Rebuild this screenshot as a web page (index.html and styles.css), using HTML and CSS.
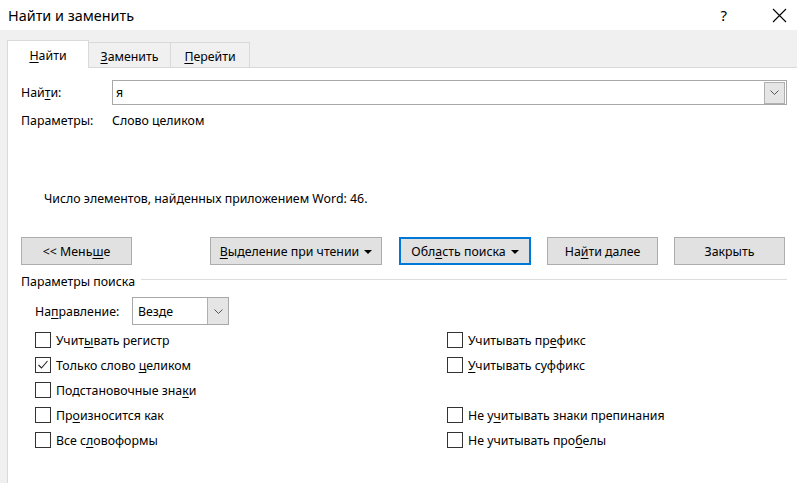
FILE: index.html
```html
<!DOCTYPE html>
<html lang="ru">
<head>
<meta charset="utf-8">
<title>Найти и заменить</title>
<link rel="stylesheet" href="styles.css">
</head>
<body>
<div class="window">
  <header class="titlebar">
    <span class="title">Найти и заменить</span>
    <span class="help">?</span>
    <svg class="close" width="15" height="15" viewBox="0 0 15 15"><path d="M1 1 L14 14 M14 1 L1 14" stroke="#000" stroke-width="1.1" fill="none"/></svg>
  </header>
  <div class="frame">
    <nav class="tabs">
      <div class="tab tab-find active"><span><u>Н</u>айти</span></div>
      <div class="tab tab-replace"><span><u>З</u>аменить</span></div>
      <div class="tab tab-goto"><span><u>П</u>ерейти</span></div>
    </nav>
    <main class="panel">
      <div class="row find-row">
        <label class="label">Най<u>т</u>и:</label>
        <div class="combo">
          <span class="combo-text">я</span>
          <span class="combo-btn"><svg width="9" height="5" viewBox="0 0 9 5"><path d="M0.5 0.5 L4.5 4.5 L8.5 0.5" stroke="#555" fill="none"/></svg></span>
        </div>
      </div>
      <div class="row params-row">
        <span class="label">Параметры:</span>
        <span>Слово целиком</span>
      </div>
      <div class="count">Число элементов, найденных приложением Word: 46.</div>
      <div class="buttons">
        <button class="btn btn-less"><span>&lt;&lt; Мень<u>ш</u>е</span></button>
        <button class="btn btn-read"><span><u>В</u>ыделение при чтении</span><span class="caret"></span></button>
        <button class="btn btn-area focused"><span>Обл<u>а</u>сть поиска</span><span class="caret"></span></button>
        <button class="btn btn-next"><span>На<u>й</u>ти далее</span></button>
        <button class="btn btn-close"><span>Закрыть</span></button>
      </div>
      <div class="group-title"><span>Параметры поиска</span><span class="group-line"></span></div>
      <div class="dir-row">
        <span class="dir-label">На<u>п</u>равление:</span>
        <div class="select">
          <span class="select-text">Везде</span>
          <span class="select-btn"><svg width="9" height="5" viewBox="0 0 9 5"><path d="M0.5 0.5 L4.5 4.5 L8.5 0.5" stroke="#555" fill="none"/></svg></span>
        </div>
      </div>
      <div class="checks">
        <div class="check"><span class="box"></span><span>Учит<u>ы</u>вать регистр</span></div>
        <div class="check"><span class="box"></span><span>Учитывать пр<u>е</u>фикс</span></div>
        <div class="check"><span class="box"><svg width="14" height="14" viewBox="0 0 14 14"><path d="M2.5 7 L5.5 10 L11.5 3" stroke="#222" stroke-width="1.1" fill="none"/></svg></span><span>Только слово <u>ц</u>еликом</span></div>
        <div class="check"><span class="box"></span><span><u>У</u>читывать суффикс</span></div>
        <div class="check"><span class="box"></span><span>Подстановочные зна<u>к</u>и</span></div>
        <div class="check empty"></div>
        <div class="check"><span class="box"></span><span>Пр<u>о</u>износится как</span></div>
        <div class="check"><span class="box"></span><span>Не у<u>ч</u>итывать знаки препинания</span></div>
        <div class="check"><span class="box"></span><span>Все с<u>л</u>овоформы</span></div>
        <div class="check"><span class="box"></span><span>Не учитывать про<u>б</u>елы</span></div>
      </div>
    </main>
  </div>
</div>
</body>
</html>
```
FILE: styles.css
```css
* { box-sizing: border-box; }
html, body { margin: 0; padding: 0; }
body {
  width: 797px;
  height: 483px;
  overflow: hidden;
  font-family: "Noto Sans", "Open Sans", sans-serif;
  font-size: 12.35px;
  color: #000;
  background: #fff;
}
u { text-decoration: underline; text-underline-offset: 2px; text-decoration-thickness: 1px; }

.window { display: flex; flex-direction: column; height: 483px; }

.titlebar {
  height: 30px;
  flex: none;
  display: flex;
  align-items: center;
  padding-left: 8px;
  padding-right: 10px;
  background: #fff;
}
.title { font-size: 14.4px; }
.help { margin-left: auto; font-size: 15px; margin-right: 45px; }
.close { display: block; }

.frame {
  flex: 1;
  display: flex;
  flex-direction: column;
  background: #f0f0f0;
  padding-left: 7px;
}
.tabs {
  height: 37px;
  flex: none;
  display: flex;
  align-items: flex-end;
}
.tab {
  height: 25px;
  border: 1px solid #d9d9d9;
  border-bottom: none;
  display: flex;
  align-items: center;
  justify-content: center;
  padding-top: 2px;
  background: #f0f0f0;
}
.tab-find { width: 82px; }
.tab-replace { width: 83px; margin-left: -1px; }
.tab-goto { width: 80px; margin-left: -1px; }
.tab.active {
  height: 28px;
  background: #fff;
  margin-bottom: -1px;
  position: relative;
  z-index: 1;
  padding-top: 1px;
}

.panel {
  flex: 1;
  background: #fff;
  border-top: 1px solid #d9d9d9;
  border-left: 1px solid #d9d9d9;
  padding: 12px 10px 0 13px;
}

.row { display: flex; align-items: center; }
.label { width: 91px; flex: none; }
.find-row { height: 25px; }
.combo {
  flex: 1;
  height: 25px;
  border: 1px solid #a8a8a8;
  display: flex;
  align-items: center;
  padding: 1px;
}
.combo-text { flex: 1; padding-left: 2px; }
.combo-btn {
  width: 21px;
  height: 22px;
  background: #e5e5e5;
  border: 1px solid #b0b0b0;
  display: flex;
  align-items: center;
  justify-content: center;
}
.params-row { height: 15px; margin-top: 8px; }

.count { margin-top: 63px; padding-left: 23px; height: 16px; line-height: 16px; }

.buttons {
  display: flex;
  margin-top: 30px;
  height: 28px;
}
.btn {
  font: inherit;
  color: #000;
  height: 28px;
  background: #e1e1e1;
  border: 1px solid #adadad;
  padding: 0;
  display: flex;
  align-items: center;
  justify-content: center;
}
.btn-less { width: 111px; }
.btn-read { width: 172px; margin-left: 78px; }
.btn-area { width: 132px; margin-left: 17px; }
.btn-next { width: 111px; margin-left: 16px; }
.btn-close { width: 111px; margin-left: 16px; }
.btn.focused { border: 2px solid #0078d7; }
.caret {
  display: inline-block;
  width: 0; height: 0;
  border-left: 4px solid transparent;
  border-right: 4px solid transparent;
  border-top: 4px solid #000;
  margin-left: 5px;
  margin-top: 1px;
}

.group-title {
  display: flex;
  align-items: center;
  margin-top: 7px;
  height: 18px;
}
.group-line { flex: 1; height: 1px; background: #dcdcdc; margin-left: 6px; margin-top: -3px; }

.dir-row {
  display: flex;
  align-items: center;
  margin-top: 7px;
  padding-left: 14px;
  height: 28px;
}
.dir-label { width: 97px; flex: none; }
.select {
  width: 97px;
  height: 28px;
  border: 1px solid #a8a8a8;
  display: flex;
  align-items: stretch;
}
.select-text { flex: 1; display: flex; align-items: center; padding-left: 5px; }
.select-btn {
  width: 21px;
  background: #e5e5e5;
  border-left: 1px solid #b0b0b0;
  display: flex;
  align-items: center;
  justify-content: center;
}

.checks {
  display: grid;
  grid-template-columns: 412px 1fr;
  grid-auto-rows: 25px;
  margin-top: 7px;
  padding-left: 14px;
}
.check { display: flex; align-items: flex-start; height: 25px; }
.box {
  width: 16px;
  height: 16px;
  border: 1px solid #333;
  margin-right: 5px;
  flex: none;
  display: flex;
  align-items: center;
  justify-content: center;
  background: #fff;
}
```
